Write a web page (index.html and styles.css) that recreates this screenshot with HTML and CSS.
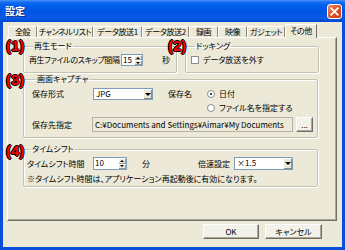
FILE: index.html
```html
<!DOCTYPE html>
<html lang="ja">
<head>
    <meta charset="UTF-8">
    <title>設定</title>
    <link rel="stylesheet" href="styles.css">
</head>
<body>
    <div class="window">
        <div class="titlebar">
            <span class="title">設定</span>
            <span class="close">
                <svg width="15" height="15" viewBox="0 0 15 15">
                    <defs>
                        <linearGradient id="cg" x1="0" y1="0" x2="1" y2="1">
                            <stop offset="0" stop-color="#f08a6c"/>
                            <stop offset="0.5" stop-color="#e0532c"/>
                            <stop offset="1" stop-color="#c23a14"/>
                        </linearGradient>
                    </defs>
                    <rect x="0.5" y="0.5" width="14" height="14" rx="2.5" fill="url(#cg)" stroke="#fff"/>
                    <path d="M4.3 4.3 L10.7 10.7 M10.7 4.3 L4.3 10.7" stroke="#fff" stroke-width="1.8" stroke-linecap="square"/>
                </svg>
            </span>
        </div>

        <div class="client">
            <div class="tabs">
                <span class="tab">全般</span>
                <span class="tab">チャンネルリスト</span>
                <span class="tab">データ放送1</span>
                <span class="tab">データ放送2</span>
                <span class="tab">録画</span>
                <span class="tab">映像</span>
                <span class="tab">ガジェット</span>
                <span class="tab active">その他</span>
            </div>

            <div class="panel">
                <div class="group-row">
                    <fieldset class="group g-play">
                        <legend>再生モード</legend>
                        <div class="line">
                            <span class="play-label">再生ファイルのスキップ間隔</span>
                            <span class="spin spin-small">
                                <span class="spin-val">15</span>
                                <span class="spin-btns"><i class="up"></i><i class="down"></i></span>
                            </span>
                            <span class="unit-sec">秒</span>
                        </div>
                    </fieldset>

                    <fieldset class="group g-dock">
                        <legend>ドッキング</legend>
                        <div class="line">
                            <span class="check"></span>
                            <span class="check-text">データ放送を外す</span>
                        </div>
                    </fieldset>
                </div>

                <fieldset class="group g-capture">
                    <legend>画面キャプチャ</legend>
                    <div class="cap-top">
                        <span class="cap-label">保存形式</span>
                        <span class="combo combo-jpg">
                            <span class="combo-val">JPG</span>
                            <span class="combo-btn"></span>
                        </span>
                        <span class="name-label">保存名</span>
                        <div class="radios">
                            <div class="radio-item"><span class="radio checked"></span>日付</div>
                            <div class="radio-item"><span class="radio"></span>ファイル名を指定する</div>
                        </div>
                    </div>
                    <div class="cap-path">
                        <span class="path-label">保存先指定</span>
                        <span class="path-field">C:¥Documents and Settings¥Aimar¥My Documents</span>
                        <span class="btn btn-browse">...</span>
                    </div>
                </fieldset>

                <fieldset class="group g-shift">
                    <legend>タイムシフト</legend>
                    <div class="line shift-line">
                        <span class="shift-label">タイムシフト時間</span>
                        <span class="spin spin-wide">
                            <span class="spin-val">10</span>
                            <span class="spin-btns"><i class="up"></i><i class="down"></i></span>
                        </span>
                        <span class="unit-min">分</span>
                        <span class="speed-label">倍速設定</span>
                        <span class="combo combo-speed">
                            <span class="combo-val">×1.5</span>
                            <span class="combo-btn"></span>
                        </span>
                    </div>
                    <div class="note">※タイムシフト時間は、アプリケーション再起動後に有効になります。</div>
                </fieldset>
            </div>

            <div class="buttons">
                <span class="btn btn-ok">OK</span>
                <span class="btn btn-cancel">キャンセル</span>
            </div>

            <!-- annotation marks -->
            <span class="mark m1">(1)</span>
            <span class="mark m2">(2)</span>
            <span class="mark m3">(3)</span>
            <span class="mark m4">(4)</span>
        </div>
    </div>
</body>
</html>
```

FILE: styles.css
```css
body {
    margin: 0;
    font-family: "Noto Sans CJK JP", sans-serif;
    font-size: 8px;
    font-feature-settings: "palt";
    color: #000;
    background: #fff;
}

.window {
    width: 345px;
    height: 250px;
    display: flex;
    flex-direction: column;
    background: #0a4fdc;
}

.titlebar {
    height: 22px;
    flex: none;
    display: flex;
    align-items: center;
    padding: 0 3px 0 5px;
    background: linear-gradient(#4a95fa 0, #1a6ef2 2px, #0060ec 5px, #0055e4 12px, #0a5be6 18px, #0048d4 22px);
}

.title {
    flex: 1;
    color: #fff;
    font-size: 10px;
    font-weight: bold;
    line-height: 12px;
    text-shadow: 1px 1px 0 #0a2a8c;
}

.close {
    width: 15px;
    height: 15px;
    display: block;
}

.close svg {
    display: block;
}

.client {
    position: relative;
    flex: 1;
    margin: 0 3px 3px;
    padding: 2px 5px 0 4px;
    background: #ece9d8;
}

/* tabs */
.tabs {
    display: flex;
    align-items: flex-end;
    height: 13px;
    padding-left: 1px;
    position: relative;
    z-index: 1;
}

.tab {
    box-sizing: border-box;
    height: 11px;
    line-height: 10px;
    text-align: center;
    white-space: nowrap;
    letter-spacing: -0.4px;
    border-top: 1px solid #fff;
    border-left: 1px solid #fff;
    border-right: 1px solid #8d8a7d;
}

.tab:nth-child(1) { width: 29px; }
.tab:nth-child(2) { width: 56px; }
.tab:nth-child(3) { width: 49px; }
.tab:nth-child(4) { width: 47px; }
.tab:nth-child(5) { width: 29px; }
.tab:nth-child(6) { width: 29px; }
.tab:nth-child(7) { width: 38px; }

.tab.active {
    width: 32px;
    height: 14px;
    line-height: 12px;
    margin-bottom: -1px;
    background: #ece9d8;
    border-right-color: #716f64;
}

.panel {
    box-sizing: border-box;
    height: 184px;
    padding: 3px 0 0 15px;
    border-top: 1px solid #fff;
    border-left: 1px solid #fff;
    border-right: 1px solid #716f64;
    border-bottom: 1px solid #716f64;
    box-shadow: inset -1px -1px 0 #aca899;
}

/* group boxes */
.group {
    margin: 0;
    min-width: 0;
    box-sizing: border-box;
    border: 1px solid #c5c2b2;
    border-radius: 2px;
    box-shadow: 1px 1px 0 #fff, inset 1px 1px 0 #fff;
}

.group legend {
    padding: 0 1px;
    margin-left: 4px;
    line-height: 10px;
}

.group-row {
    display: flex;
}

.g-play {
    width: 154px;
    padding: 3px 0 6px 5px;
}

.g-dock {
    width: 134px;
    margin-left: 8px;
    padding: 3px 0 6px 5px;
}

.line {
    display: flex;
    align-items: center;
    height: 12px;
    line-height: 10px;
    white-space: nowrap;
}

.play-label {
    width: 92px;
    letter-spacing: -0.4px;
}

.unit-sec {
    margin-left: 19px;
}

.check {
    box-sizing: border-box;
    width: 8px;
    height: 8px;
    background: #fff;
    border: 1px solid #8b8b8b;
}

.check-text {
    margin-left: 4px;
}

.g-capture {
    width: 295px;
    margin-top: 1px;
    padding: 4px 0 5px 8px;
}

.cap-top {
    display: flex;
    align-items: flex-start;
    line-height: 12px;
}

.cap-label {
    width: 61px;
}

.name-label {
    width: 39px;
    margin-left: 15px;
}

.radios {
    display: flex;
    flex-direction: column;
    gap: 2px;
}

.radio-item {
    display: flex;
    align-items: center;
    height: 12px;
    white-space: nowrap;
}

.radio {
    box-sizing: border-box;
    width: 8px;
    height: 8px;
    margin-right: 4px;
    border: 1px solid #8b8b8b;
    border-radius: 50%;
    background: #fff;
    display: flex;
    align-items: center;
    justify-content: center;
}

.radio.checked::after {
    content: "";
    width: 2px;
    height: 2px;
    border-radius: 50%;
    background: #000;
}

.cap-path {
    display: flex;
    align-items: center;
    margin-top: 3px;
    height: 15px;
}

.path-label {
    width: 60px;
}

.path-field {
    box-sizing: border-box;
    width: 201px;
    height: 15px;
    line-height: 13px;
    padding-left: 2px;
    border: 1px solid #b5b2a4;
    background: #ece9d8;
    white-space: nowrap;
    overflow: hidden;
}

.g-shift {
    width: 295px;
    margin-top: 6px;
    padding: 3px 0 2px 3px;
}

.shift-line {
    height: 13px;
}

.shift-label {
    width: 66px;
}

.unit-min {
    margin-left: 15px;
}

.speed-label {
    margin-left: 48px;
}

.note {
    margin-top: 4px;
    line-height: 10px;
    white-space: nowrap;
}

/* spin and combo */
.spin,
.combo {
    box-sizing: border-box;
    display: flex;
    border: 1px solid #7f9db9;
    background: #fff;
}

.spin-small {
    width: 22px;
    height: 12px;
}

.spin-wide {
    width: 34px;
    height: 13px;
}

.spin-val {
    flex: 1;
    padding-left: 1px;
    line-height: 10px;
}

.spin-btns {
    width: 8px;
    display: flex;
    flex-direction: column;
}

.spin-btns i {
    flex: 1;
    display: flex;
    align-items: center;
    justify-content: center;
    background: #ece9d8;
    box-shadow: inset 1px 1px 0 #fff, inset -1px -1px 0 #9d9a8c;
}

.spin-btns i::after {
    content: "";
    border-left: 2px solid transparent;
    border-right: 2px solid transparent;
}

.spin-btns .up::after {
    border-bottom: 2px solid #000;
}

.spin-btns .down::after {
    border-top: 2px solid #000;
}

.combo-jpg {
    width: 60px;
    height: 12px;
}

.combo-speed {
    width: 59px;
    height: 13px;
    margin-left: 4px;
}

.combo-val {
    flex: 1;
    padding-left: 2px;
    line-height: 10px;
}

.combo-btn {
    width: 9px;
    display: flex;
    align-items: center;
    justify-content: center;
    background: #ece9d8;
    box-shadow: inset 1px 1px 0 #fff, inset -1px -1px 0 #8d8a7d;
}

.combo-btn::after {
    content: "";
    border-left: 3px solid transparent;
    border-right: 3px solid transparent;
    border-top: 3px solid #000;
}

/* buttons */
.btn {
    box-sizing: border-box;
    display: flex;
    align-items: center;
    justify-content: center;
    height: 15px;
    background: #f2f1ea;
    border-top: 1px solid #fff;
    border-left: 1px solid #fff;
    border-right: 1px solid #716f64;
    border-bottom: 1px solid #716f64;
    box-shadow: inset -1px -1px 0 #aca899;
}

.btn-browse {
    width: 17px;
    margin-left: 3px;
    line-height: 8px;
}

.buttons {
    display: flex;
    justify-content: flex-end;
    gap: 6px;
    margin-top: 3px;
    padding-right: 15px;
}

.btn-ok {
    width: 56px;
}

.btn-cancel {
    width: 57px;
}

/* red annotation marks */
.mark {
    position: absolute;
    z-index: 2;
    font-family: "Liberation Sans", sans-serif;
    font-size: 15px;
    font-weight: bold;
    line-height: 15px;
    color: #f00;
    text-shadow: -1px 0 0 #000, 1px 0 0 #000, 0 -1px 0 #000, 0 1px 0 #000;
}

.m1 { left: 3px; top: 16px; }
.m2 { left: 165px; top: 16px; }
.m3 { left: 3px; top: 50px; }
.m4 { left: 3px; top: 121px; }
```
